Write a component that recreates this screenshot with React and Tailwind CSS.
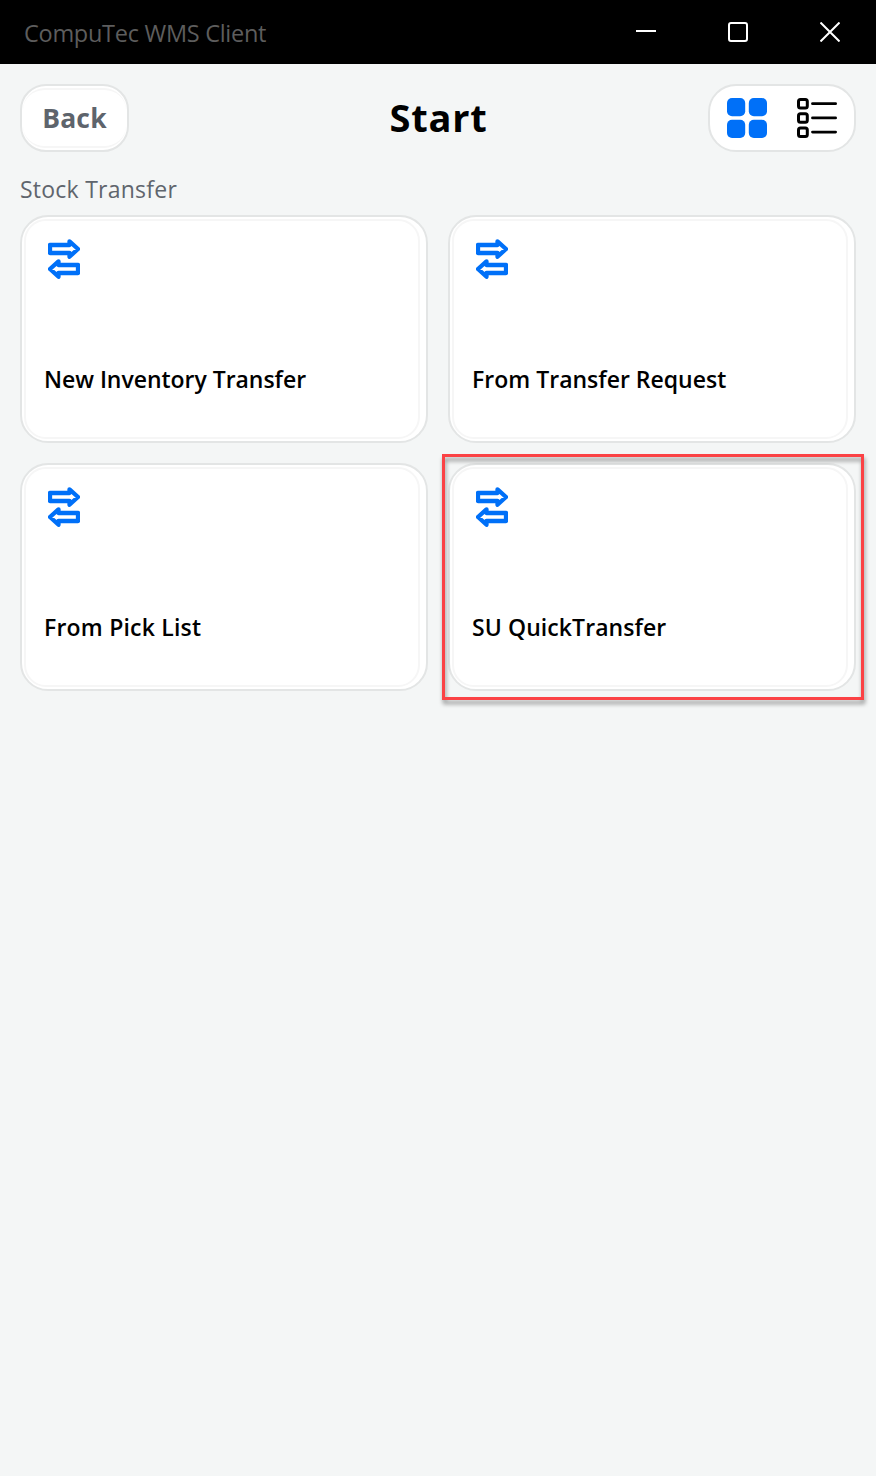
const TransferIcon = () => (
  <svg width="32" height="40" viewBox="0 0 32 40" fill="none" stroke="#0070f8" strokeWidth="4.3" strokeLinejoin="round">
    <path d="M2 6H21.5V2.3L30 10L21.5 17.7V14H2Z" />
    <path d="M30 26H10.5V22.3L2 30L10.5 37.7V34H30Z" />
  </svg>
);

const GridIcon = () => (
  <svg width="40" height="40" viewBox="0 0 40 40" fill="#0070f8">
    <rect width="18.2" height="18.2" rx="5" />
    <rect x="21.8" width="18.2" height="18.2" rx="5" />
    <rect y="21.8" width="18.2" height="18.2" rx="5" />
    <rect x="21.8" y="21.8" width="18.2" height="18.2" rx="5" />
  </svg>
);

const ListIcon = () => (
  <svg width="40" height="40" viewBox="0 0 40 40" fill="none" stroke="#000" strokeLinecap="round">
    {[1.5, 15.7, 29.9].map((y) => (
      <g key={y}>
        <rect x="1.5" y={y} width="8.8" height="8.6" rx="2" strokeWidth="3" />
        <path d={`M15.5 ${y + 4.2}H38.6`} strokeWidth="2.8" />
      </g>
    ))}
  </svg>
);

const items = [
  { label: "New Inventory Transfer", spacing: "tracking-[-0.03px]" },
  { label: "From Transfer Request", spacing: "tracking-[0.01px]" },
  { label: "From Pick List", spacing: "tracking-[0.2px]" },
  { label: "SU QuickTransfer", spacing: "tracking-[0.08px]", marked: true },
];

function Card({ label, spacing, marked }) {
  return (
    <div className="relative h-[228px] rounded-[28px] border-2 border-[#e3e5e5] bg-white pt-[2px] pr-[6px] pb-[2px] pl-[2px]">
      <div className="flex h-full flex-col rounded-[22px] border-2 border-[#f6f6f6] pt-[18px] pl-[18px]">
        <div className="ml-[4px] h-[40px]">
          <TransferIcon />
        </div>
        <div className="mt-[83px] flex h-[34px] items-center">
          <span className={`whitespace-nowrap text-[23px] font-semibold text-black ${spacing}`}>{label}</span>
        </div>
      </div>
      {marked && (
        <div className="absolute top-[-11px] left-[-8px] h-[246px] w-[422px] border-[3px] border-[#fb4245] drop-shadow-[1px_4px_2px_rgba(0,0,0,0.4)]" />
      )}
    </div>
  );
}

export default function App() {
  return (
    <div className="flex h-[1476px] w-[876px] flex-col overflow-hidden bg-[#f4f6f6] font-['Open_Sans',sans-serif]">
      <header className="flex h-[64px] items-center justify-between bg-black pr-[36px] pl-[24px]">
        <span className="pt-[3px] text-[23.5px] tracking-[-0.28px] text-[#5d5d5d]">CompuTec WMS Client</span>
        <div className="flex items-center gap-[72px]">
          <svg width="20" height="20" viewBox="0 0 20 20" stroke="#fff" strokeWidth="2">
            <path d="M0 9H20" />
          </svg>
          <svg width="20" height="20" viewBox="0 0 20 20" fill="none" stroke="#fff" strokeWidth="2">
            <rect x="1" y="1" width="18" height="18" rx="2" />
          </svg>
          <svg width="20" height="20" viewBox="0 0 20 20" stroke="#fff" strokeWidth="2">
            <path d="M0.5 0.5L19.5 19.5M19.5 0.5L0.5 19.5" />
          </svg>
        </div>
      </header>
      <div className="grid grid-cols-[1fr_auto_1fr] items-center px-[20px] pt-[20px]">
        <div className="h-[68px] w-[109px] rounded-[26px] border-2 border-[#e3e5e5] bg-white px-[1px] py-[2px]">
          <div className="flex h-full items-center justify-center rounded-[22px] border-y-2 border-[#f6f6f6]">
            <span className="pt-[2px] text-[26.5px] font-bold tracking-[0.2px] text-[#5e646c]">Back</span>
          </div>
        </div>
        <h1 className="pb-[2px] pl-[1px] text-[38px] leading-[50px] font-bold tracking-[0.8px] text-black">Start</h1>
        <div className="flex h-[68px] w-[148px] items-center justify-between justify-self-end rounded-[28px] border-2 border-[#e3e5e5] bg-white px-[17px]">
          <GridIcon />
          <ListIcon />
        </div>
      </div>
      <div className="mt-[21px] flex h-[32px] items-center px-[20px]">
        <span className="text-[23px] font-medium tracking-[0.24px] text-[#5f656d]">Stock Transfer</span>
      </div>
      <main className="mt-[10px] grid grid-cols-2 gap-[20px] px-[20px]">
        {items.map((item) => (
          <Card key={item.label} {...item} />
        ))}
      </main>
    </div>
  );
}
